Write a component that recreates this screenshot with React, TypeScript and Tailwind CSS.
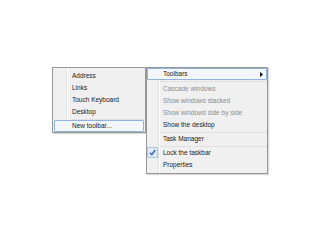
import React from "react";

const Sep = ({ h }: { h: string }) => (
  <div className={`flex ${h} items-center`}>
    <div className="h-px w-full bg-[#e0e0e0]" />
  </div>
);

function Item({
  label,
  disabled,
  highlight,
  indent,
  arrow,
  check,
}: {
  label: string;
  disabled?: boolean;
  highlight?: boolean;
  indent: string;
  arrow?: boolean;
  check?: boolean;
}) {
  return (
    <div className="relative flex h-[12px] items-center">
      {highlight && (
        <div className="absolute inset-0 rounded-[1px] border border-[#8fb3dc] bg-[#f3f7fc]" />
      )}
      {check && (
        <div className="absolute left-0 top-[0px] flex h-[11px] w-[11px] items-center justify-center border border-[#a9c8ec] bg-[#dfeaf7]">
          <svg width="7" height="7" viewBox="0 0 7 7">
            <path d="M1 3.6 L2.8 5.6 L6.2 1" fill="none" stroke="#2a62b8" strokeWidth="1.3" />
          </svg>
        </div>
      )}
      <span
        className={`relative whitespace-nowrap ${indent} ${disabled ? "text-[#8c8c8c]" : "text-[#1a1a1a]"}`}
      >
        {label}
      </span>
      {arrow && (
        <svg className="absolute right-[4px] top-[4px]" width="3" height="5" viewBox="0 0 3 5">
          <path d="M0 0 L3 2.5 L0 5 Z" fill="#000" />
        </svg>
      )}
    </div>
  );
}

export default function App() {
  return (
    <div
      className="h-[240px] w-[320px] bg-white pl-[52px] pt-[67px]"
      style={{ fontFamily: '"Liberation Sans", Arial, sans-serif' }}
    >
      <div className="flex items-start text-[6.5px] leading-none">
        <div className="relative w-[94px] border border-[#979797] bg-[#f0f0f0] px-[1px] pt-[2px] shadow-[1px_1px_1px_rgba(0,0,0,0.15)]">
          <div className="absolute bottom-0 left-[13px] top-0 w-px bg-[#e2e3e3]" />
          <div className="absolute bottom-0 left-[14px] top-0 w-px bg-white" />
          <Item label="Address" indent="pl-[18px]" />
          <Item label="Links" indent="pl-[18px]" />
          <Item label="Touch Keyboard" indent="pl-[18px]" />
          <Item label="Desktop" indent="pl-[18px]" />
          <div className="pl-[16px]">
            <Sep h="h-[2px]" />
          </div>
          <Item label="New toolbar..." indent="pl-[18px]" highlight />
        </div>
        <div className="relative w-[122px] border border-[#979797] bg-[#f0f0f0] pb-[2px] shadow-[1px_1px_1px_rgba(0,0,0,0.15)]">
          <div className="absolute bottom-0 left-[11px] top-0 w-px bg-[#e2e3e3]" />
          <div className="absolute bottom-0 left-[12px] top-0 w-px bg-white" />
          <Item label="Toolbars" indent="pl-[16px]" highlight arrow />
          <div className="pl-[13px]">
            <Sep h="h-[3px]" />
          </div>
          <Item label="Cascade windows" indent="pl-[16px]" disabled />
          <Item label="Show windows stacked" indent="pl-[16px]" disabled />
          <Item label="Show windows side by side" indent="pl-[16px]" disabled />
          <Item label="Show the desktop" indent="pl-[16px]" />
          <div className="pl-[13px]">
            <Sep h="h-[2px]" />
          </div>
          <Item label="Task Manager" indent="pl-[16px]" />
          <div className="pl-[13px]">
            <Sep h="h-[2px]" />
          </div>
          <Item label="Lock the taskbar" indent="pl-[16px]" check />
          <Item label="Properties" indent="pl-[16px]" />
        </div>
      </div>
    </div>
  );
}
